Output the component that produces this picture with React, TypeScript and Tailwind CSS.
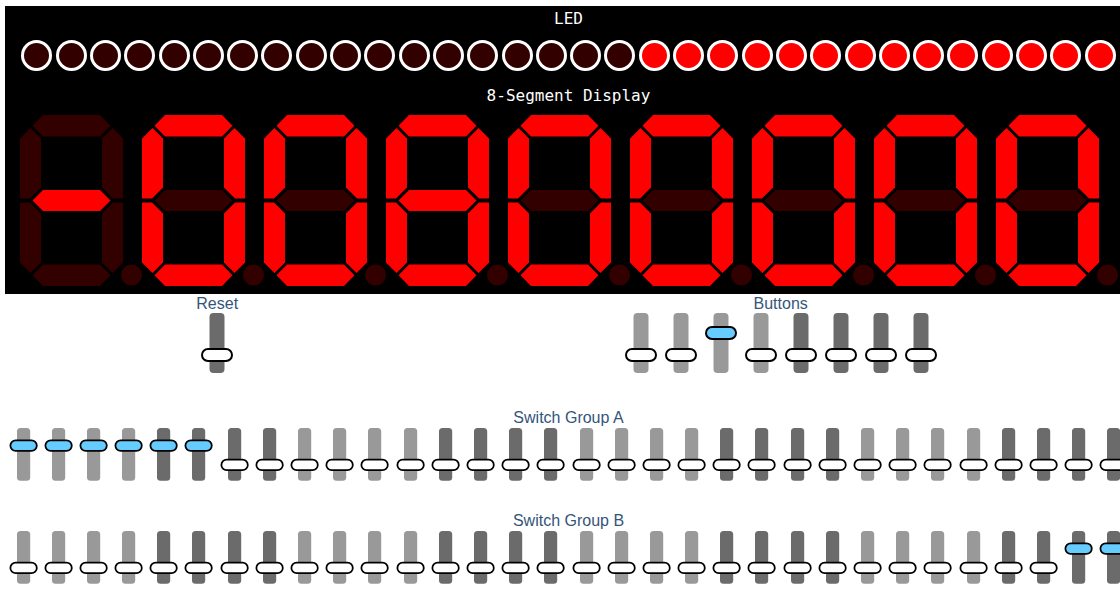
import React from 'react';

const ON = '#ff0000';
const OFF = '#330000';

type Seg = 'a' | 'b' | 'c' | 'd' | 'e' | 'f' | 'g';

// segment outlines in a 122x171 digit cell (103 wide digit + decimal point)
const SEGMENTS: Record<Seg, string> = {
  a: '12.5,10.75 23,0 80,0 90.5,10.75 80,21.5 23,21.5',
  b: '103,23.5 92.5,13 82,23.5 82,72.5 93,83.5 103,83.5',
  c: '103,147.5 92.5,158 82,147.5 82,98.5 93,87.5 103,87.5',
  d: '12.5,160.25 23,149.5 80,149.5 90.5,160.25 80,171 23,171',
  e: '0,147.5 10.5,158 21,147.5 21,98.5 10,87.5 0,87.5',
  f: '0,23.5 10.5,13 21,23.5 21,72.5 10,83.5 0,83.5',
  g: '12.5,85.5 23,75 80,75 90.5,85.5 80,96 23,96',
};

const ZERO: Seg[] = ['a', 'b', 'c', 'd', 'e', 'f'];
const EIGHT: Seg[] = ['a', 'b', 'c', 'd', 'e', 'f', 'g'];

const digits: Seg[][] = [['g'], ZERO, ZERO, EIGHT, ZERO, ZERO, ZERO, ZERO, ZERO];

const leds = Array.from({ length: 32 }, (_, i) => i >= 18);

function Digit({ lit, dot = false }: { lit: Seg[]; dot?: boolean }) {
  return (
    <svg width={122} height={171} viewBox="0 0 122 171">
      {(Object.keys(SEGMENTS) as Seg[]).map((s) => (
        <polygon key={s} points={SEGMENTS[s]} fill={lit.includes(s) ? ON : OFF} />
      ))}
      <circle cx={111.5} cy={160} r={10.5} fill={dot ? ON : OFF} />
    </svg>
  );
}

function Switch({ on, dark, scale = 1 }: { on: boolean; dark: boolean; scale?: number }) {
  return (
    <svg width={40 * scale} height={96 * scale} viewBox="0 0 40 96">
      <rect x={12.5} y={0} width={15} height={60} rx={4} fill={dark ? '#6b6b6b' : '#999999'} />
      <rect
        x={5}
        y={on ? 14 : 36}
        width={30}
        height={12}
        rx={6}
        fill={on ? '#66ccff' : '#ffffff'}
        stroke="#000000"
        strokeWidth={2}
      />
    </svg>
  );
}

function SwitchGroup({
  label,
  states,
  scale = 1,
  allDark = false,
}: {
  label: string;
  states: boolean[];
  scale?: number;
  allDark?: boolean;
}) {
  return (
    <div className="flex flex-col items-center">
      <div className="text-[16px] leading-[18.4px] text-[#34557a]">{label}</div>
      <div className="flex">
        {states.map((on, i) => (
          <Switch key={i} on={on} dark={allDark || Math.floor(i / 4) % 2 === 1} scale={scale} />
        ))}
      </div>
    </div>
  );
}

const buttons = [false, false, true, false, false, false, false, false];
const groupA = Array.from({ length: 32 }, (_, i) => i < 6);
const groupB = Array.from({ length: 32 }, (_, i) => i >= 30);

export default function App() {
  return (
    <div className="w-[1120px] h-[590px] overflow-hidden bg-white pt-[6px] pl-[5px] font-['Liberation_Sans',Arial,sans-serif]">
      <div className="w-[1127px]">
        <div className="flex flex-col items-center bg-black pt-[3px] pb-[8px] font-['DejaVu_Sans_Mono',monospace] text-[16px] leading-[19px] text-white">
          <div>LED</div>
          <div className="mt-[12px] flex gap-[3.3px]">
            {leds.map((lit, i) => (
              <div
                key={i}
                className={
                  lit
                    ? 'h-[31px] w-[31px] rounded-full border-[3px] border-white bg-[#ff0000]'
                    : 'h-[31px] w-[31px] rounded-full border-[3px] border-white bg-[#330000]'
                }
              />
            ))}
          </div>
          <div className="mt-[15px]">8-Segment Display</div>
          <div className="mt-[10px] flex">
            {digits.map((lit, i) => (
              <Digit key={i} lit={lit} />
            ))}
          </div>
        </div>

        <div className="mt-[1px] flex justify-around">
          <SwitchGroup label="Reset" states={[false]} allDark />
          <SwitchGroup label="Buttons" states={buttons} />
        </div>

        <SwitchGroup label="Switch Group A" states={groupA} scale={0.88} />
        <SwitchGroup label="Switch Group B" states={groupB} scale={0.88} />
      </div>
    </div>
  );
}
